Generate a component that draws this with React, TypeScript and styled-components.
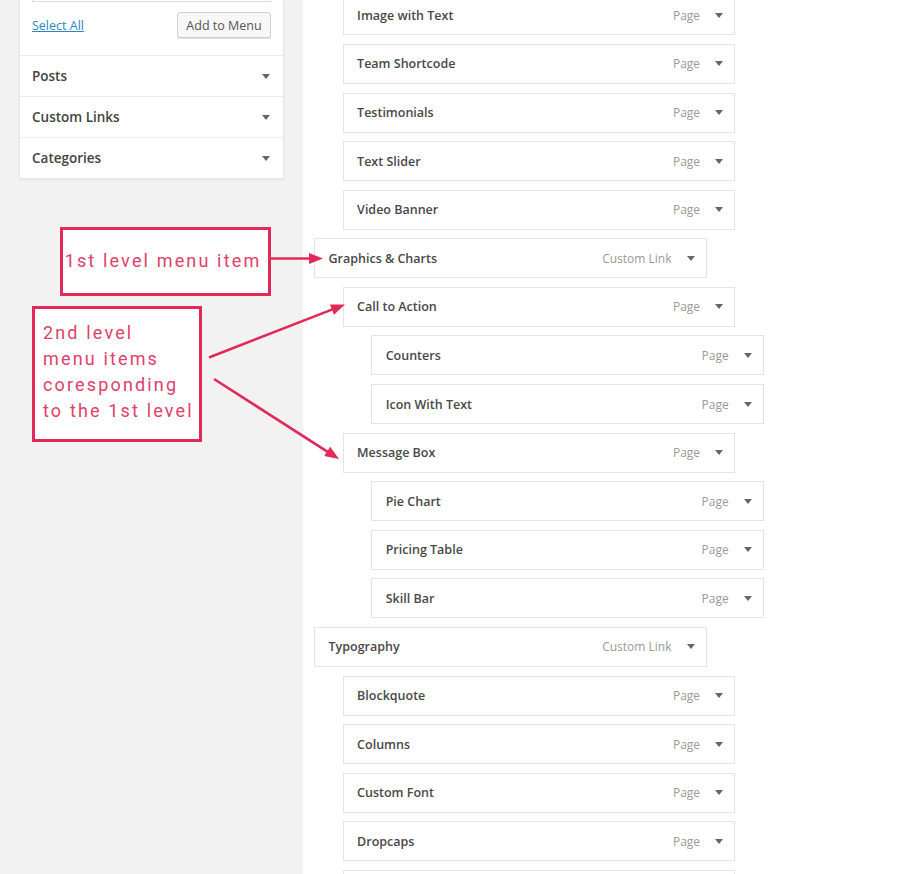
import React from "react";
import styled, { createGlobalStyle } from "styled-components";

const GlobalStyle = createGlobalStyle`
  html, body { margin: 0; padding: 0; overflow: hidden; }
  body { font-family: "Open Sans", "Liberation Sans", sans-serif; background: #fff; }
  * { box-sizing: border-box; }
`;

const ACCENT = "#e2295a";

const Page = styled.div`
  position: relative;
  display: flex;
  width: 904px;
  height: 874px;
  overflow: hidden;
`;

const Sidebar = styled.aside`
  width: 303px;
  flex: none;
  background: #f2f2f2;
  padding-left: 19px;
`;

const Panel = styled.div`
  width: 265px;
  background: #fff;
  border: 1px solid #e6e6e6;
  border-top: none;
  box-shadow: 0 1px 2px rgba(0, 0, 0, 0.06);
`;

const ListBox = styled.div`
  margin: 0 12px;
  height: 2px;
  border: 1px solid #dcdcdc;
  border-top: none;
`;

const ActionRow = styled.div`
  display: flex;
  align-items: center;
  justify-content: space-between;
  padding: 10px 12px 17px 12px;
`;

const SelectAll = styled.a`
  font-size: 12.5px;
  color: #2a86c2;
  text-decoration: underline;
  cursor: pointer;
`;

const AddButton = styled.button`
  height: 26px;
  width: 94px;
  padding: 0;
  font-family: "Open Sans", sans-serif;
  font-size: 12.5px;
  color: #555;
  background: #f7f7f7;
  border: 1px solid #cfcfcf;
  border-radius: 3px;
  box-shadow: 0 1px 0 #e0e0e0;
`;

const Section = styled.div`
  display: flex;
  align-items: center;
  justify-content: space-between;
  height: 41px;
  padding: 0 13px 0 12px;
  border-top: 1px solid #ececec;
  font-size: 13.5px;
  font-weight: 600;
  color: #444;
`;

const Caret = styled.span`
  width: 0;
  height: 0;
  border-left: 4px solid transparent;
  border-right: 4px solid transparent;
  border-top: 5px solid #666;
`;

const Main = styled.main`
  flex: 1;
  background: #fff;
`;

const MenuList = styled.div`
  display: flex;
  flex-direction: column;
  gap: 8.59px;
  margin-top: -4.6px;
`;

const Item = styled.div<{ $depth: number }>`
  display: flex;
  align-items: center;
  width: 392.5px;
  height: 40px;
  margin-left: ${(p) => 11 + p.$depth * 28.6}px;
  padding: 0 11px 0 13.5px;
  background: #fff;
  border: 1px solid #e4e4e4;
`;

const ItemTitle = styled.span`
  flex: 1;
  font-size: 12.5px;
  font-weight: 600;
  color: #484848;
`;

const ItemType = styled.span`
  font-size: 12px;
  color: #999;
  margin-right: 15px;
`;

const Callout = styled.div<{ $top: number; $left: number; $w: number; $h: number }>`
  position: absolute;
  top: ${(p) => p.$top}px;
  left: ${(p) => p.$left}px;
  width: ${(p) => p.$w}px;
  height: ${(p) => p.$h}px;
  background: #fff;
  border: 3px solid ${ACCENT};
  font-family: Roboto, "Liberation Sans", sans-serif;
  font-size: 18px;
  font-weight: 400;
  letter-spacing: 2.15px;
  line-height: 26px;
  color: #e0406a;
  white-space: nowrap;
`;

const CenterCallout = styled(Callout)`
  display: flex;
  align-items: center;
  justify-content: center;
  padding: 0 5px 1px 0;
`;

const BlockCallout = styled(Callout)`
  padding: 11px 8px;
`;

const Overlay = styled.svg`
  position: absolute;
  top: 0;
  left: 0;
  pointer-events: none;
`;

type Row = { title: string; depth: number; type?: string };

const rows: Row[] = [
  { title: "Image with Text", depth: 1 },
  { title: "Team Shortcode", depth: 1 },
  { title: "Testimonials", depth: 1 },
  { title: "Text Slider", depth: 1 },
  { title: "Video Banner", depth: 1 },
  { title: "Graphics & Charts", depth: 0, type: "Custom Link" },
  { title: "Call to Action", depth: 1 },
  { title: "Counters", depth: 2 },
  { title: "Icon With Text", depth: 2 },
  { title: "Message Box", depth: 1 },
  { title: "Pie Chart", depth: 2 },
  { title: "Pricing Table", depth: 2 },
  { title: "Skill Bar", depth: 2 },
  { title: "Typography", depth: 0, type: "Custom Link" },
  { title: "Blockquote", depth: 1 },
  { title: "Columns", depth: 1 },
  { title: "Custom Font", depth: 1 },
  { title: "Dropcaps", depth: 1 },
  { title: "", depth: 1, type: "" },
];

function Arrow({ x1, y1, x2, y2 }: { x1: number; y1: number; x2: number; y2: number }) {
  const dx = x2 - x1;
  const dy = y2 - y1;
  const len = Math.hypot(dx, dy);
  const ux = dx / len;
  const uy = dy / len;
  const hl = 14;
  const hw = 5.5;
  const bx = x2 - ux * hl;
  const by = y2 - uy * hl;
  const p1 = `${x2},${y2}`;
  const p2 = `${bx - uy * hw},${by + ux * hw}`;
  const p3 = `${bx + uy * hw},${by - ux * hw}`;
  return (
    <g>
      <line x1={x1} y1={y1} x2={bx + ux * 2} y2={by + uy * 2} stroke={ACCENT} strokeWidth={2.6} />
      <polygon points={`${p1} ${p2} ${p3}`} fill={ACCENT} />
    </g>
  );
}

export default function App() {
  return (
    <>
      <GlobalStyle />
      <Page>
        <Sidebar>
          <Panel>
            <ListBox />
            <ActionRow>
              <SelectAll>Select All</SelectAll>
              <AddButton>Add to Menu</AddButton>
            </ActionRow>
            <Section>
              Posts <Caret />
            </Section>
            <Section>
              Custom Links <Caret />
            </Section>
            <Section>
              Categories <Caret />
            </Section>
          </Panel>
        </Sidebar>
        <Main>
          <MenuList>
            {rows.map((r, i) => (
              <Item key={i} $depth={r.depth}>
                <ItemTitle>{r.title}</ItemTitle>
                {r.type !== "" && <ItemType>{r.type ?? "Page"}</ItemType>}
                {r.type !== "" && <Caret />}
              </Item>
            ))}
          </MenuList>
        </Main>
        <CenterCallout $top={227} $left={60} $w={211} $h={69}>
          1st level menu item
        </CenterCallout>
        <BlockCallout $top={306} $left={32} $w={170} $h={136}>
          2nd level
          <br />
          menu items
          <br />
          coresponding
          <br />
          to the 1st level
        </BlockCallout>
        <Overlay width={904} height={874} viewBox="0 0 904 874">
          <Arrow x1={271} y1={258.5} x2={323} y2={258.5} />
          <Arrow x1={209} y1={357.5} x2={345} y2={304.5} />
          <Arrow x1={214} y1={379} x2={339} y2={459} />
        </Overlay>
      </Page>
    </>
  );
}
